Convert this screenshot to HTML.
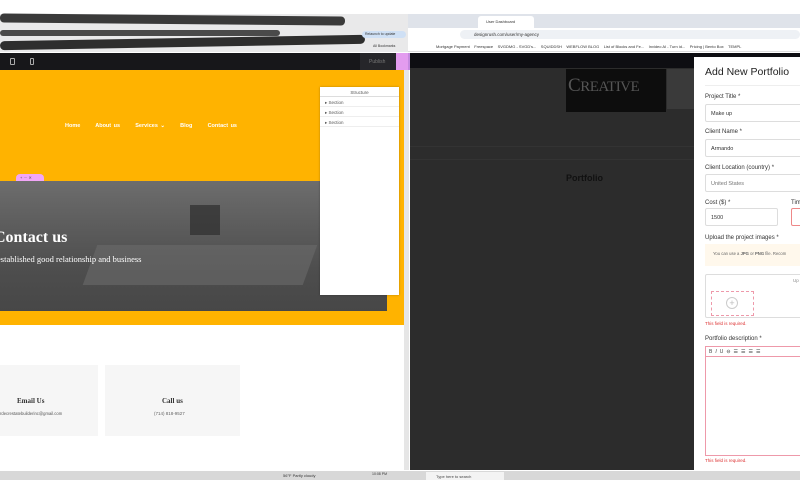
<!DOCTYPE html>
<html><head><style>
*{margin:0;padding:0;box-sizing:border-box}
body{width:800px;height:480px;overflow:hidden;position:relative;background:#fff;font-family:"Liberation Sans",sans-serif}
.a{position:absolute}
.lbl{position:absolute;left:705px;font-size:6px;color:#333}
.inp{position:absolute;left:705px;width:100px;height:18px;border:1px solid #ddd;border-radius:2px;font-size:5.5px;color:#333;padding:6px 0 0 5px;background:#fff}
.err{position:absolute;left:705px;font-size:4.5px;color:#d33}
</style></head><body>
<div class="a" style="left:0;top:14px;width:408px;height:38px;background:#e9e9ea"></div>
<div class="a" style="left:0;top:15px;width:345px;height:9px;background:#3a3a3a;border-radius:4px;transform:rotate(0.5deg)"></div>
<div class="a" style="left:0;top:30px;width:280px;height:6px;background:#4a4a4a;border-radius:3px"></div>
<div class="a" style="left:0;top:38px;width:365px;height:9px;background:#2e2e2e;border-radius:5px;transform:rotate(-1deg)"></div>
<div class="a" style="left:362px;top:31px;width:44px;height:7px;background:#cfe0f5;border-radius:4px;font-size:3.5px;padding:1px 3px;color:#333">Relaunch to update</div>
<div class="a" style="left:373px;top:44px;font-size:3.5px;color:#333">All Bookmarks</div>
<div class="a" style="left:408px;top:14px;width:392px;height:14px;background:#dfe3ea"></div>
<div class="a" style="left:478px;top:16px;width:56px;height:12px;background:#fff;border-radius:3px 3px 0 0;font-size:4px;padding:3px 8px;color:#333">User Dashboard</div>
<div class="a" style="left:408px;top:28px;width:392px;height:12px;background:#fff"></div>
<div class="a" style="left:460px;top:30px;width:340px;height:9px;background:#eef1f5;border-radius:5px;font-size:4.5px;padding:2px 14px;color:#333">designrush.com/user/my-agency</div>
<div class="a" style="left:408px;top:40px;width:392px;height:12px;background:#fff;border-bottom:1px solid #ddd;font-size:4px;color:#333;padding:4px 28px;white-space:nowrap">Mortgage Payment &nbsp;&nbsp; Freespace &nbsp;&nbsp; SVGDMG - SVGD's... &nbsp;&nbsp; SQUIDDSH &nbsp;&nbsp; WEBFLOW BLOG &nbsp;&nbsp; List of Blocks and Fe... &nbsp;&nbsp; Invideo AI - Turn id... &nbsp;&nbsp; Pricing | Bento Box &nbsp;&nbsp; TEMPL</div>
<div class="a" style="left:0;top:53px;width:408px;height:17px;background:#17171a"></div>
<div class="a" style="left:360px;top:53px;width:36px;height:17px;background:#26262a;font-size:5px;color:#777;padding:6px 9px">Publish</div>
<div class="a" style="left:396px;top:53px;width:12px;height:17px;background:#e39cef"></div>
<div class="a" style="left:10px;top:58px;width:5px;height:7px;border:1px solid #aaa;border-radius:1px"></div>
<div class="a" style="left:30px;top:58px;width:4px;height:7px;border:1px solid #aaa;border-radius:1px"></div>
<div class="a" style="left:0;top:70px;width:404px;height:255px;background:#ffb300"></div>
<div class="a" style="left:65px;top:123px;font-size:5.5px;color:#fff;font-weight:bold;word-spacing:1px;white-space:nowrap">Home &nbsp;&nbsp;&nbsp;&nbsp; About us &nbsp;&nbsp;&nbsp;&nbsp; Services ⌄ &nbsp;&nbsp;&nbsp;&nbsp; Blog &nbsp;&nbsp;&nbsp;&nbsp; Contact us</div>
<div class="a" style="left:0;top:181px;width:387px;height:130px;background:linear-gradient(180deg,#6d6d6d 0%,#5a5a5a 40%,#4d4d4d 70%,#474747 100%)"></div>
<div class="a" style="left:90px;top:245px;width:220px;height:40px;background:#6a6a6a;opacity:.6;transform:skewX(-20deg)"></div>
<div class="a" style="left:190px;top:205px;width:30px;height:30px;background:#2e2e2e;opacity:.7"></div>
<div class="a" style="left:-6px;top:229px;font-family:'Liberation Serif',serif;font-size:16px;font-weight:bold;color:#fff">Contact us</div>
<div class="a" style="left:-3px;top:254px;font-family:'Liberation Serif',serif;font-size:8.5px;color:#fff">established good relationship and business</div>
<div class="a" style="left:16px;top:174px;width:28px;height:7px;background:#f1a6f7;border-radius:4px 4px 0 0;font-size:4px;color:#555;padding:1px 4px">+ ⋯ ✕</div>
<div class="a" style="left:320px;top:87px;width:79px;height:208px;background:#fff;box-shadow:0 0 2px rgba(0,0,0,.3);font-size:4.5px;color:#555">
<div style="height:10px;border-bottom:1px solid #ddd;text-align:center;padding-top:3px">Structure</div>
<div style="height:10px;border-bottom:1px solid #eee;padding:3px 5px">▸ Section</div>
<div style="height:10px;border-bottom:1px solid #eee;padding:3px 5px">▸ Section</div>
<div style="height:10px;border-bottom:1px solid #eee;padding:3px 5px">▸ Section</div>
</div>
<div class="a" style="left:404px;top:70px;width:5px;height:400px;background:#e6e6e6"></div>
<div class="a" style="left:0;top:365px;width:98px;height:71px;background:#f6f6f6"></div>
<div class="a" style="left:105px;top:365px;width:135px;height:71px;background:#f6f6f6"></div>
<div class="a" style="left:17px;top:397px;font-family:'Liberation Serif',serif;font-size:7px;font-weight:bold;color:#333">Email Us</div>
<div class="a" style="left:0;top:411px;font-size:4.2px;color:#555">rdecrestatebuilderinc@gmail.com</div>
<div class="a" style="left:162px;top:397px;font-family:'Liberation Serif',serif;font-size:7px;font-weight:bold;color:#333">Call us</div>
<div class="a" style="left:154px;top:411px;font-size:4.5px;color:#666">(714) 818-9527</div>
<div class="a" style="left:408px;top:53px;width:2px;height:17px;background:#c58ae0"></div>
<div class="a" style="left:410px;top:53px;width:390px;height:15px;background:#0e0e12"></div>
<div class="a" style="left:410px;top:68px;width:284px;height:402px;background:#2c2c2c"></div>
<div class="a" style="left:410px;top:146px;width:284px;height:1px;background:#333"></div>
<div class="a" style="left:410px;top:159px;width:284px;height:1px;background:#333"></div>
<div class="a" style="left:566px;top:69px;width:100px;height:43px;background:#0d0d0d;font-family:'Liberation Serif',serif;font-size:19px;color:#555;padding:6px 2px;letter-spacing:-0.5px">C<span style="font-size:15px">REATIVE</span></div>
<div class="a" style="left:667px;top:69px;width:27px;height:40px;background:#3a3a3a"></div>
<div class="a" style="left:566px;top:173px;font-size:9px;font-weight:bold;color:#111">Portfolio</div>
<div class="a" style="left:694px;top:57px;width:106px;height:413px;background:#fff"></div>
<div class="a" style="left:705px;top:66px;font-size:10.5px;color:#222;white-space:nowrap">Add New Portfolio</div>
<div class="a" style="left:705px;top:85px;width:95px;height:1px;background:#eee"></div>
<div class="lbl" style="top:94px">Project Title *</div>
<div class="inp" style="top:104px">Make up</div>
<div class="lbl" style="top:129px">Client Name *</div>
<div class="inp" style="top:139px">Armando</div>
<div class="lbl" style="top:165px">Client Location (country) *</div>
<div class="inp" style="top:174px;color:#777">United States</div>
<div class="lbl" style="top:200px">Cost ($) *</div>
<div class="inp" style="top:208px;width:73px">1500</div>
<div class="lbl" style="top:200px;left:791px">Tim</div>
<div class="inp" style="top:208px;left:791px;border-color:#e88">&nbsp;</div>
<div class="lbl" style="top:235px">Upload the project images *</div>
<div class="a" style="left:705px;top:244px;width:100px;height:22px;background:#fff8ec;font-size:4.2px;color:#666;padding:7px 8px;white-space:nowrap">You can use a <b>JPG</b> or <b>PNG</b> file. Recom</div>
<div class="a" style="left:705px;top:274px;width:100px;height:44px;border:1px solid #ddd;border-radius:2px"></div>
<div class="a" style="left:793px;top:278px;font-size:4.5px;color:#888">Up</div>
<div class="a" style="left:711px;top:291px;width:43px;height:25px;border:1px dashed #e9a;"></div>
<div class="a" style="left:726px;top:297px;width:12px;height:12px;border:1px solid #ccc;border-radius:50%;font-size:9px;line-height:10px;text-align:center;color:#bbb">+</div>
<div class="err" style="top:321px">This field is required.</div>
<div class="lbl" style="top:336px">Portfolio description *</div>
<div class="a" style="left:705px;top:346px;width:100px;height:110px;border:1px solid #e9a"></div>
<div class="a" style="left:705px;top:346px;width:100px;height:11px;border:1px solid #e9a;font-size:5px;color:#444;padding:2px 3px;white-space:nowrap;letter-spacing:3px">B<i>I</i>U⊖☰☰☰☰</div>
<div class="err" style="top:458px">This field is required.</div>
<div class="a" style="left:0;top:471px;width:800px;height:9px;background:#d8d8d8"></div>
<div class="a" style="left:426px;top:472px;width:78px;height:8px;background:#f3f3f3;font-size:4px;color:#444;padding:2px 10px">Type here to search</div>
<div class="a" style="left:283px;top:473px;font-size:4px;color:#333;white-space:nowrap">56°F Partly cloudy</div>
<div class="a" style="left:372px;top:472px;font-size:3.5px;color:#333">10:08 PM</div>
</body></html>
